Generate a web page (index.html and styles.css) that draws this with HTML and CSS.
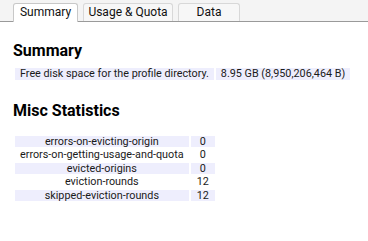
FILE: index.html
```html
<!DOCTYPE html>
<html>
<head>
<meta charset="utf-8">
<link rel="stylesheet" href="styles.css">
</head>
<body>
<div class="page">
  <div class="tabs">
    <div class="tab active">Summary</div>
    <div class="tab">Usage &amp; Quota</div>
    <div class="tab">Data</div>
  </div>
  <div class="panel">
    <h2 class="title">Summary</h2>
    <table class="info">
      <tr class="shade"><td>Free disk space for the profile directory.</td><td>8.95 GB (8,950,206,464 B)</td></tr>
    </table>
    <h2 class="title title2">Misc Statistics</h2>
    <table class="stats">
      <tr class="shade"><td class="k">errors-on-evicting-origin</td><td class="v">0</td></tr>
      <tr><td class="k">errors-on-getting-usage-and-quota</td><td class="v">0</td></tr>
      <tr class="shade"><td class="k">evicted-origins</td><td class="v">0</td></tr>
      <tr><td class="k">eviction-rounds</td><td class="v">12</td></tr>
      <tr class="shade"><td class="k">skipped-eviction-rounds</td><td class="v">12</td></tr>
    </table>
  </div>
</div>
</body>
</html>
```

FILE: styles.css
```css
html, body {
  margin: 0;
  padding: 0;
  background: #fff;
}
body {
  font-family: Roboto, "Liberation Sans", sans-serif;
  font-size: 10.8px;
  color: #1a1a1a;
}
.page {
  box-shadow: 0 1px 2px rgba(0,0,0,0.45);
  padding-bottom: 1px;
}
.tabs {
  display: flex;
  gap: 5px;
  padding: 3px 0 0 13px;
  background: #f4f4f4;
  border-bottom: 1px solid #9a9a9a;
  height: 18px;
}
.tab {
  box-sizing: border-box;
  height: 18px;
  padding: 0;
  border: 1px solid #d8d8d8;
  border-bottom: none;
  border-radius: 3px 3px 0 0;
  background: #f7f7f7;
  font-size: 12px;
  line-height: 17px;
  color: #111;
  text-align: center;
}
.tab:nth-child(1) { width: 65px; }
.tab:nth-child(2) { width: 90px; }
.tab:nth-child(3) { width: 62px; }
.tab.active {
  background: #fff;
  border-color: #c8c8c8;
  height: 19px;
  margin-bottom: -1px;
}
.panel {
  padding: 19px 13px 0 13px;
}
.title {
  margin: 0;
  font-size: 16px;
  font-weight: bold;
  color: #000;
  line-height: 20px;
}
.title2 {
  margin-top: 19px;
}
table {
  border-spacing: 2px;
  margin-top: 5px;
}
td {
  padding: 0 5px;
  line-height: 11.5px;
  height: 11.5px;
  white-space: nowrap;
}
.shade td {
  background: #eeeefd;
}
.stats {
  margin-top: 13px;
}
.stats .k { text-align: center; }
.stats .v { text-align: center; padding: 0 6px; }
```
